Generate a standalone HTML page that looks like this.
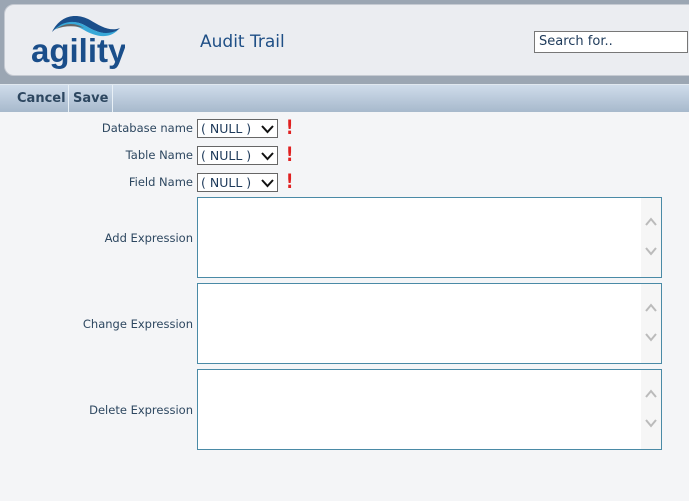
<!DOCTYPE html>
<html><head><style>
*{margin:0;padding:0;box-sizing:border-box}
body{width:689px;height:501px;background:#f4f5f7;font-family:"DejaVu Sans",Verdana,sans-serif;position:relative;overflow:hidden}
#top{position:absolute;left:0;top:0;width:689px;height:84px;background:#9ba6b3}
#panel{position:absolute;left:4px;top:4px;width:700px;height:72px;background:#ebedf1;border-radius:10px;border:1px solid #c5cad2}
#bar{position:absolute;left:0;top:84px;width:689px;height:28px;background:linear-gradient(#cfdceb,#a7b9cc);border-top:1px solid #e0e8f0}
.btn{position:absolute;top:0;height:27px;line-height:27px;font-size:13px;font-weight:bold;color:#2d4760;border-right:1px solid #e8f0f6}
.lbl{position:absolute;right:496px;font-size:11.5px;color:#2d4760;text-align:right;white-space:nowrap}
.sel{position:absolute;left:197px;width:81px;height:19px;border:1px solid #666;background:#fff;font-size:12.5px;color:#1e3a5a;padding-left:3px;line-height:17px}
.sel svg{position:absolute;right:3px;top:5px}
.ex{position:absolute;left:286px;color:#e02020;font-weight:bold;font-size:16px;transform:scaleY(1.2)}
.ta{position:absolute;left:197px;width:465px;height:81px;border:1px solid #4a8aa6;background:#fff}
.ta .sb{position:absolute;right:0;top:0;width:20px;height:79px;background:#f6f6f6}
</style></head><body>
<div id="top"></div><div id="panel"></div>
<svg style="position:absolute;left:30px;top:10px" width="95" height="60">
<path d="M22 22 C30 6 45 2 60 10 C70 16 80 22 90 18 C80 28 66 22 56 16 C44 9 32 12 22 22Z" fill="#1a4e8a"/>
<path d="M24 20 C34 10 46 10 56 16 C66 22 76 26 88 20 C78 30 64 26 54 20 C44 14 34 14 24 20Z" fill="#38a8d8"/>
<path d="M26 19 C36 12 46 13 54 18 C46 16 36 15 26 19Z" fill="#666"/>
<text x="1" y="52" font-family="Liberation Sans,sans-serif" font-weight="bold" font-size="33" fill="#1a4e8a">agility</text>
</svg>
<div style="position:absolute;left:200px;top:32px;font-size:17px;color:#1f4f86">Audit Trail</div>
<div style="position:absolute;left:534px;top:31px;width:154px;height:22px;border:1px solid #777;background:#fff;font-size:13px;color:#1e3a5a;padding:2px 4px">Search for..</div>
<div id="bar"><div class="btn" style="left:0;width:69px;padding-left:17px">Cancel</div><div class="btn" style="left:69px;width:44px;padding-left:4px">Save</div></div>
<div class="lbl" style="top:121px">Database name</div>
<div class="lbl" style="top:148px">Table Name</div>
<div class="lbl" style="top:175px">Field Name</div>
<div class="sel" style="top:119px">( NULL )<svg width="13" height="9"><path d="M1 1 L6.5 7 L12 1" stroke="#111" stroke-width="2" fill="none"/></svg></div>
<div class="sel" style="top:146px">( NULL )<svg width="13" height="9"><path d="M1 1 L6.5 7 L12 1" stroke="#111" stroke-width="2" fill="none"/></svg></div>
<div class="sel" style="top:173px">( NULL )<svg width="13" height="9"><path d="M1 1 L6.5 7 L12 1" stroke="#111" stroke-width="2" fill="none"/></svg></div>
<div class="ex" style="top:118px">!</div><div class="ex" style="top:145px">!</div><div class="ex" style="top:172px">!</div>
<div class="lbl" style="top:231px">Add Expression</div>
<div class="lbl" style="top:317px">Change Expression</div>
<div class="lbl" style="top:403px">Delete Expression</div>
<div class="ta" style="top:197px"><div class="sb"><svg width="20" height="79"><path d="M5 27 L10 21 L15 27 M5 50 L10 56 L15 50" stroke="#bbb" stroke-width="2" fill="none"/></svg></div></div>
<div class="ta" style="top:283px"><div class="sb"><svg width="20" height="79"><path d="M5 27 L10 21 L15 27 M5 50 L10 56 L15 50" stroke="#bbb" stroke-width="2" fill="none"/></svg></div></div>
<div class="ta" style="top:369px"><div class="sb"><svg width="20" height="79"><path d="M5 27 L10 21 L15 27 M5 50 L10 56 L15 50" stroke="#bbb" stroke-width="2" fill="none"/></svg></div></div>
</body></html>
